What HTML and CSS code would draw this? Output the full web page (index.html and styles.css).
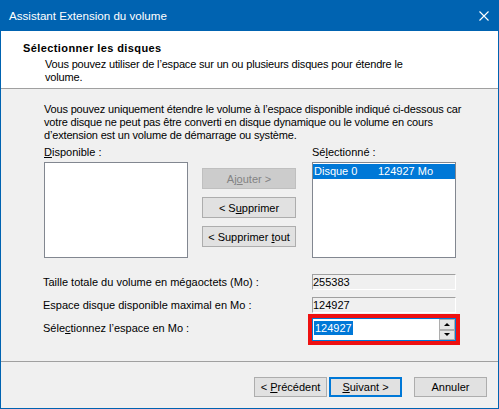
FILE: index.html
```html
<!DOCTYPE html>
<html lang="fr">
<head>
  <meta charset="UTF-8">
  <title>Assistant Extension du volume</title>
  <link rel="stylesheet" href="styles.css">
</head>
<body>
  <div class="window">
    <!-- Title bar -->
    <div class="titlebar">
      <span class="title">Assistant Extension du volume</span>
      <svg class="close-icon" width="10" height="10" viewBox="0 0 10 10">
        <path d="M0.5 0.5 L9.5 9.5 M9.5 0.5 L0.5 9.5" stroke="#fff" stroke-width="1.1" fill="none"/>
      </svg>
    </div>

    <!-- Wizard page header -->
    <div class="header">
      <div class="header-title">Sélectionner les disques</div>
      <div class="header-sub">Vous pouvez utiliser de l’espace sur un ou plusieurs disques pour étendre le<br>volume.</div>
    </div>

    <div class="content">
      <p class="intro">Vous pouvez uniquement étendre le volume à l’espace disponible indiqué ci-dessous car<br>votre disque ne peut pas être converti en disque dynamique ou le volume en cours<br>d’extension est un volume de démarrage ou système.</p>

      <!-- Disk picker -->
      <div class="picker">
        <div class="pick-col">
          <label class="pick-label"><u>D</u>isponible :</label>
          <div class="listbox"></div>
        </div>
        <div class="pick-buttons">
          <button class="btn" disabled>Aj<u>o</u>uter &gt;</button>
          <button class="btn">&lt; S<u>u</u>pprimer</button>
          <button class="btn">&lt; Supprimer <u>t</u>out</button>
        </div>
        <div class="pick-col">
          <label class="pick-label">Sé<u>l</u>ectionné :</label>
          <div class="listbox">
            <div class="list-item selected"><span class="disk-name">Disque 0</span><span>124927 Mo</span></div>
          </div>
        </div>
      </div>

      <!-- Size fields -->
      <div class="fields">
        <div class="field-row">
          <span class="field-label">Taille totale du volume en mégaoctets (Mo) :</span>
          <div class="readonly">255383</div>
        </div>
        <div class="field-row">
          <span class="field-label">Espace disque disponible maximal en Mo :</span>
          <div class="readonly">124927</div>
        </div>
        <div class="field-row">
          <span class="field-label">Séle<u>c</u>tionnez l’espace en Mo :</span>
          <div class="spin">
            <div class="spin-text"><span class="sel">124927</span></div>
            <div class="spin-btns">
              <div class="spin-btn"><span class="arrow-up"></span></div>
              <div class="spin-btn"><span class="arrow-down"></span></div>
            </div>
          </div>
        </div>
      </div>
    </div>

    <!-- Wizard navigation -->
    <div class="footer">
      <button class="btn nav-btn prev">&lt; <u>P</u>récédent</button>
      <button class="btn nav-btn default"><u>S</u>uivant &gt;</button>
      <button class="btn nav-btn">Annuler</button>
    </div>
  </div>
</body>
</html>
```

FILE: styles.css
```css
* {
  box-sizing: border-box;
}

body {
  margin: 0;
  font-family: "Liberation Sans", Arial, sans-serif;
  font-size: 11px;
  line-height: 13px;
  color: #000;
  background-color: #f0f0f0;
}

.window {
  width: 499px;
  height: 409px;
  border: 1px solid #0063b1;
  display: flex;
  flex-direction: column;
  background-color: #f0f0f0;
}

.titlebar {
  height: 30px;
  flex-shrink: 0;
  background-color: #0063b1;
  color: #fff;
  display: flex;
  align-items: center;
  padding-left: 8px;
  font-size: 11.6px;
  line-height: 14px;
}

.title {
  flex: 1;
}

.close-icon {
  margin-right: 9px;
}

.header {
  height: 58px;
  flex-shrink: 0;
  background-color: #fff;
  border-bottom: 1px solid #a0a0a0;
  padding: 11px 0 0 22px;
}

.header-title {
  font-weight: bold;
  letter-spacing: 0.4px;
}

.header-sub {
  margin: 3px 0 0 22px;
  letter-spacing: -0.17px;
}

.content {
  flex: 1;
  padding: 14px 0 0 43px;
}

.intro {
  margin: 0;
  white-space: nowrap;
  letter-spacing: -0.17px;
}

.picker {
  display: flex;
  margin-top: 4px;
}

.pick-col {
  width: 144px;
}

.pick-label {
  display: block;
  margin-bottom: 3px;
}

.listbox {
  height: 96px;
  background-color: #fff;
  border: 1px solid #828790;
  padding-top: 1px;
}

.list-item {
  height: 15px;
  line-height: 14px;
  padding-left: 1px;
  display: flex;
  white-space: nowrap;
}

.list-item.selected {
  background-color: #0078d7;
  color: #fff;
}

.disk-name {
  width: 64px;
}

.pick-buttons {
  width: 94px;
  margin: 22px 16px 0 14px;
  display: flex;
  flex-direction: column;
  gap: 8px;
}

.btn {
  height: 21px;
  padding: 0;
  border: 1px solid #adadad;
  background-color: #e1e1e1;
  font-family: inherit;
  font-size: 11px;
  color: #000;
  text-align: center;
  white-space: nowrap;
}

.btn:disabled {
  background-color: #cccccc;
  border-color: #bfbfbf;
  color: #838383;
}

.fields {
  margin: 16px 0 0 -1px;
}

.field-row {
  display: flex;
  align-items: baseline;
}

.field-row + .field-row {
  margin-top: 7px;
}

.field-row:last-child {
  margin-top: 5px;
}

.field-label {
  width: 269px;
  white-space: nowrap;
}

.readonly {
  width: 144px;
  height: 16px;
  line-height: 14px;
  border: 1px solid;
  border-color: #a0a0a0 #fff #fff #a0a0a0;
  background-color: #f0f0f0;
}

.spin {
  width: 144px;
  height: 23px;
  border: 1px solid #0078d7;
  background-color: #fff;
  outline: 4px solid #ee1111;
  display: flex;
}

.spin-text {
  flex: 1;
  padding: 2px 0 0 1px;
  line-height: 14px;
}

.sel {
  display: inline-block;
  background-color: #0078d7;
  color: #fff;
  padding: 0 1px;
}

.spin-btns {
  width: 16px;
  display: flex;
  flex-direction: column;
}

.spin-btn {
  flex: 1;
  border: 1px solid #adadad;
  background-color: #e5e5e5;
  display: flex;
  align-items: center;
  justify-content: center;
}

.arrow-up {
  border-left: 3px solid transparent;
  border-right: 3px solid transparent;
  border-bottom: 3px solid #000;
}

.arrow-down {
  border-left: 3px solid transparent;
  border-right: 3px solid transparent;
  border-top: 3px solid #000;
}

.footer {
  height: 47px;
  flex-shrink: 0;
  border-top: 1px solid #a0a0a0;
  padding: 15px 11px 0 0;
  display: flex;
  justify-content: flex-end;
  align-items: flex-start;
}

.nav-btn {
  width: 73px;
  height: 20px;
}

.nav-btn.prev {
  margin-right: 2px;
}

.nav-btn.default {
  border: 2px solid #0078d7;
  margin-right: 12px;
}
```
